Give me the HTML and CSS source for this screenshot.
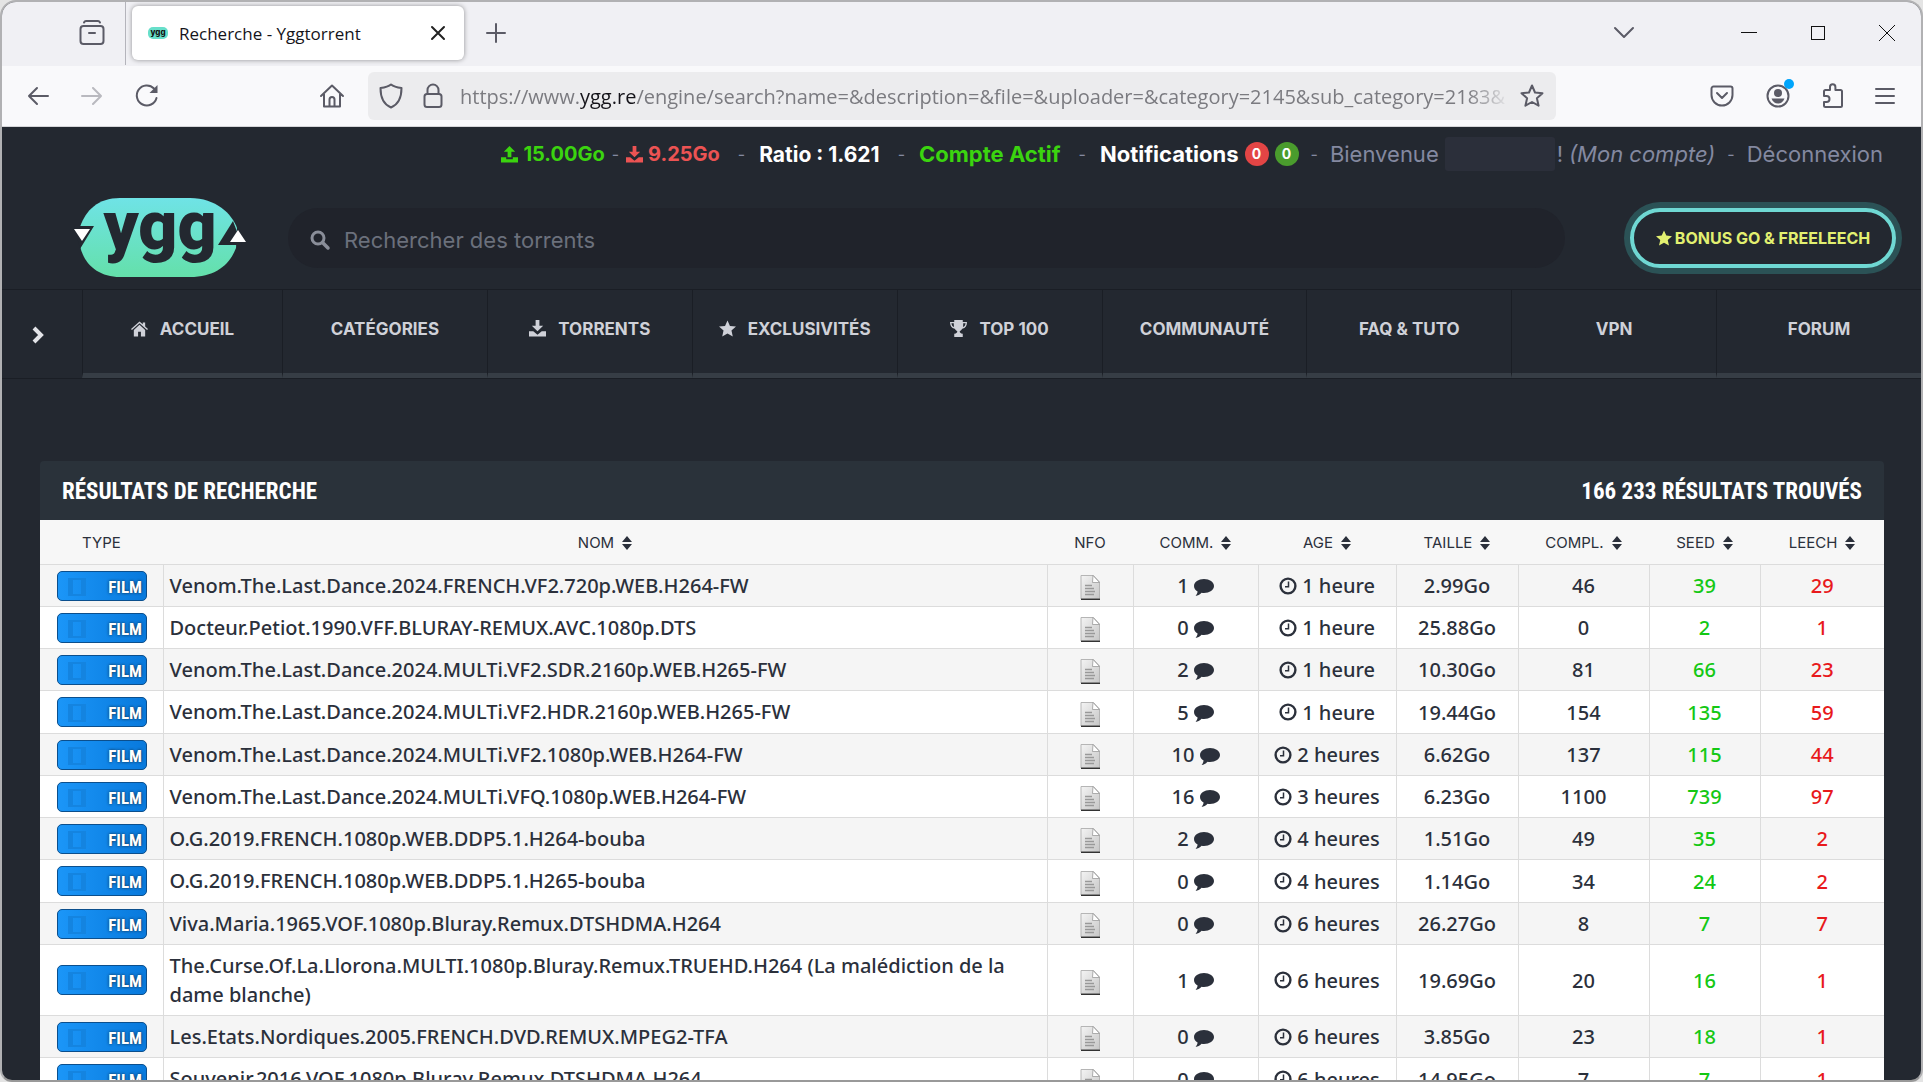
FILE: index.html
```html
<!DOCTYPE html>
<html lang="fr">
<head>
<meta charset="utf-8">
<title>Recherche - Yggtorrent</title>
<link rel="stylesheet" href="styles.css">
</head>
<body>
<svg class="sprite" aria-hidden="true">
  <defs>
    <linearGradient id="mint" x1="0" y1="0" x2="0" y2="1"><stop offset="0" stop-color="#6fe3e6"/><stop offset="1" stop-color="#64e0aa"/></linearGradient>
    <linearGradient id="paper" x1="0" y1="0" x2="1" y2="1"><stop offset="0" stop-color="#f4f4f4"/><stop offset="1" stop-color="#c6c6c6"/></linearGradient>
    <symbol id="i-sort" viewBox="0 0 10 14"><path d="M5 0 10 6H0zM5 14 0 8h10z"/></symbol>
    <symbol id="i-comment" viewBox="0 0 20 18"><path d="M10 0c5.500 0 10 3.100 10 7s-4.500 7-10 7c-.8 0-1.600-.1-2.400-.2C5.800 15.600 3.800 16.700 1.600 17c.9-1.100 1.700-2.300 2-4.400C1.400 11.300 0 9.300 0 7c0-3.900 4.500-7 10-7z"/></symbol>
    <symbol id="i-clock" viewBox="0 0 18 18"><circle cx="9" cy="9" r="7.400" fill="none" stroke="currentColor" stroke-width="2.400"/><path d="M9.500 4.500V9.800H6" fill="none" stroke="currentColor" stroke-width="1.500"/></symbol>
    <symbol id="i-nfo" viewBox="0 0 20 25"><path d="M1 .5h12.500L19.500 7v17H1z" fill="url(#paper)" stroke="#b5b5b5" stroke-width="1"/><path d="M13 .5 12.500 7.500H19.500z" fill="#fff" stroke="#9a9a9a" stroke-width=".8"/><path d="M5 10.500h7M5 13.500h9M5 16.500h10M5 19.500h9" stroke="#999" stroke-width="1.300"/><path d="M1 24.300h19" stroke="#333" stroke-width="1.400"/></symbol>
    <symbol id="i-film" viewBox="0 0 18 18"><path fill-rule="evenodd" d="M0 0h18v18H0zM5 2v14h8V2z"/></symbol>
    <symbol id="i-star" viewBox="0 0 18 17"><path d="m9 0 2.600 5.800 6.400.7-4.800 4.200L14.600 17 9 13.800 3.400 17l1.400-6.300L0 6.500l6.400-.7z"/></symbol>
    <symbol id="i-down" viewBox="0 0 18 18"><path d="M7 0h4v6h4L9 12 3 6h4zM0 12h4.500L9 15.500 13.500 12H18v5.500H0z"/></symbol>
    <symbol id="i-up" viewBox="0 0 18 18"><path d="M7 12h4V6h4L9 0 3 6h4zM0 12h5.500v2h7v-2H18v5.500H0z"/></symbol>
  </defs>
</svg>
<div class="window">
  <header class="tabstrip">
    <button class="icon-btn view-btn" aria-label="Firefox View"><svg width="26" height="26" viewBox="0 0 26 26" class="line"><path d="M5 2.500c.5-1 1-1.500 2-1.500h12c1 0 1.500.5 2 1.500"/><rect x="1.500" y="6" width="23" height="18" rx="3"/><path d="M10 13h6"/></svg></button>
    <div class="tab">
      <svg width="20" height="12" viewBox="0 0 20 12"><rect width="20" height="12" rx="5" fill="#67dfca"/><text x="10" y="8" text-anchor="middle" class="fav-text">ygg</text></svg>
      <span class="tab-title">Recherche - Yggtorrent</span>
      <button class="icon-btn" aria-label="Fermer l’onglet"><svg width="14" height="14" viewBox="0 0 14 14" class="line dark"><path d="m1 1 12 12M13 1 1 13"/></svg></button>
    </div>
    <button class="icon-btn new-tab" aria-label="Nouvel onglet"><svg width="18" height="18" viewBox="0 0 18 18" class="line"><path d="M9 0v18M0 9h18"/></svg></button>
    <div class="window-controls">
      <button class="icon-btn all-tabs" aria-label="Lister les onglets"><svg width="20" height="12" viewBox="0 0 20 12" class="line"><path d="m1 1 9 9 9-9"/></svg></button>
      <button class="icon-btn" aria-label="Réduire"><svg width="16" height="16" viewBox="0 0 16 16" class="thin"><path d="M0 7.500h16"/></svg></button>
      <button class="icon-btn" aria-label="Agrandir"><svg width="16" height="16" viewBox="0 0 16 16" class="thin"><rect x="1.500" y="1.500" width="13" height="13"/></svg></button>
      <button class="icon-btn" aria-label="Fermer"><svg width="16" height="16" viewBox="0 0 16 16" class="thin"><path d="m0 0 16 16M16 0 0 16"/></svg></button>
    </div>
  </header>
  <div class="toolbar">
    <div class="nav-buttons">
      <button class="icon-btn" aria-label="Précédent"><svg width="22" height="20" viewBox="0 0 22 20" class="line"><path d="M21 10H2M10 2l-8 8 8 8"/></svg></button>
      <button class="icon-btn faded" aria-label="Suivant"><svg width="22" height="20" viewBox="0 0 22 20" class="line"><path d="M1 10h19M12 2l8 8-8 8"/></svg></button>
      <button class="icon-btn" aria-label="Actualiser"><svg width="24" height="24" viewBox="0 0 24 24" class="line"><path d="M19 4.500A10 10 0 1 0 21.500 14"/><path d="M22.500 1v8h-8z" fill="#5b5b66" stroke="none"/></svg></button>
    </div>
    <button class="icon-btn home-btn" aria-label="Accueil"><svg width="24" height="24" viewBox="0 0 24 24" class="line"><path d="m1 12 11-10.500L23 12M4 10v12.500h16V10M9.500 22v-6.500a2.500 2.500 0 0 1 5 0V22"/></svg></button>
    <div class="urlbar">
      <svg width="24" height="26" viewBox="0 0 24 26" class="line"><path d="M12 1.500c3 2.500 6.500 3 10.500 3.500 0 9-2 16-10.500 19.500C3.500 21 1.500 14 1.500 5 5.500 4.500 9 4 12 1.500z"/></svg>
      <svg width="20" height="26" viewBox="0 0 20 26" class="line"><rect x="1.500" y="11" width="17" height="13" rx="2.500"/><path d="M4.500 11V7a5.500 5.500 0 0 1 11 0v4"/></svg>
      <div class="url">https://www.<b>ygg.re</b>/engine/search?name=&amp;description=&amp;file=&amp;uploader=&amp;category=2145&amp;sub_category=2183&amp;</div>
      <button class="icon-btn" aria-label="Marquer cette page"><svg width="24" height="24" viewBox="0 0 24 24" class="line"><path d="m12 1.500 3 7 7.500.7-5.600 5 1.700 7.500L12 18l-6.600 3.700 1.700-7.500-5.600-5L9 8.500z"/></svg></button>
    </div>
    <div class="tools">
      <button class="icon-btn" aria-label="Pocket"><svg width="24" height="22" viewBox="0 0 24 22" class="line"><path d="M3.500 1.500h17a2 2 0 0 1 2 2V10a10.500 10.500 0 0 1-21 0V3.500a2 2 0 0 1 2-2zM7 8l5 5 5-5"/></svg></button>
      <button class="icon-btn account" aria-label="Compte"><svg width="24" height="24" viewBox="0 0 24 24" class="line"><circle cx="12" cy="12" r="10.500"/><circle cx="12" cy="9" r="4" fill="#5b5b66" stroke="none"/><path d="M5.500 14.500h13c-1 3-3.500 5-6.500 5s-5.500-2-6.500-5z" fill="#5b5b66" stroke="none"/></svg><span class="dot"></span></button>
      <button class="icon-btn" aria-label="Extensions"><svg width="22" height="26" viewBox="0 0 22 26" class="line"><path d="M2 12V8.500A1.500 1.500 0 0 1 3.500 7H8V4a2.700 2.700 0 0 1 5.400 0v3h5.100A1.500 1.500 0 0 1 20 8.500v14a1.500 1.500 0 0 1-1.500 1.500h-15A1.500 1.500 0 0 1 2 22.500V19h2.500a2.700 2.700 0 0 0 0-6H2z"/></svg></button>
      <button class="icon-btn" aria-label="Menu"><svg width="18" height="16" viewBox="0 0 18 16" class="line"><path d="M0 1h18M0 8h18M0 15h18"/></svg></button>
    </div>
  </div>

  <div class="page">
    <div class="userbar">
      <span class="traffic up"><svg width="17" height="17"><use href="#i-up"/></svg>15.00Go</span>
      <span class="dash near">-</span>
      <span class="traffic down"><svg width="17" height="17"><use href="#i-down"/></svg>9.25Go</span>
      <span class="dash">-</span>
      <strong class="ratio">Ratio : 1.621</strong>
      <span class="dash">-</span>
      <strong class="active">Compte Actif</strong>
      <span class="dash">-</span>
      <strong class="notif">Notifications <span class="badge red">0</span><span class="badge green">0</span></strong>
      <span class="dash tight">-</span>
      <span class="welcome">Bienvenue <span class="masked"></span>! <a href="#"><i>(Mon compte)</i></a></span>
      <span class="dash tight">-</span>
      <a href="#">Déconnexion</a>
    </div>

    <div class="brandbar">
      <a href="#" class="logo" aria-label="ygg"><svg width="172" height="80" viewBox="0 0 172 80">
        <path d="M48 0h70c26 0 42 16 47 30l-1 20c-6 16-20 29-46 29H48C26 79 12 66 8 48V29C14 12 26 0 48 0z" fill="url(#mint)"/>
        <path d="M2 28h20L8 51zM170 47h-24l15-24z" fill="#232830"/>
        <path d="M2 31h16L10 43zM174 44h-16l8-12z" fill="#fff"/>
        <text x="88" y="51" text-anchor="middle" class="logo-text">ygg</text></svg></a>
      <label class="search"><svg width="20" height="20" viewBox="0 0 20 20"><circle cx="8" cy="8" r="6" fill="none" stroke="currentColor" stroke-width="3"/><path d="m12.500 12.500 5.500 5.500" stroke="currentColor" stroke-width="3.500" stroke-linecap="round"/></svg><input type="search" placeholder="Rechercher des torrents" aria-label="Rechercher des torrents"></label>
      <button class="bonus"><svg width="16" height="16"><use href="#i-star"/></svg>BONUS GO &amp; FREELEECH</button>
    </div>

    <nav class="menu">
      <button class="expand" aria-label="Ouvrir le menu"><svg width="12" height="18" viewBox="0 0 12 18"><path d="m2 2 7 7-7 7" fill="none" stroke="currentColor" stroke-width="4"/></svg></button>
      <a href="#"><svg width="17" height="16" viewBox="0 0 18 16"><path d="M9 0 0 8l1 1 8-7 8 7 1-1-3-2.700V1h-2.500v2.100zM9 3.500 3 9v7h4.500v-5h3v5H15V9z"/></svg>ACCUEIL</a>
      <a href="#">CATÉGORIES</a>
      <a href="#"><svg width="17" height="17"><use href="#i-down"/></svg>TORRENTS</a>
      <a href="#"><svg width="17" height="17"><use href="#i-star"/></svg>EXCLUSIVITÉS</a>
      <a href="#"><svg width="17" height="17" viewBox="0 0 18 18"><path fill-rule="evenodd" d="M4.500 0h9v2H18c0 4-1.500 6.500-5 7.200-.8 1.300-1.700 2-2.700 2.600 0 1.400.7 2.200 3.200 2.700V18h-9v-3.500c2.500-.5 3.200-1.300 3.200-2.700C6.700 11.200 5.800 10.500 5 9.200 1.500 8.500 0 6 0 2h4.500zM1.500 3.500C1.800 5.500 2.600 7 4.300 7.500 4 6.500 4 5 4 3.500zm15 0H14C14 5 14 6.500 13.700 7.500c1.700-.5 2.500-2 2.800-4z"/></svg>TOP 100</a>
      <a href="#">COMMUNAUTÉ</a>
      <a href="#">FAQ &amp; TUTO</a>
      <a href="#">VPN</a>
      <a href="#">FORUM</a>
    </nav>

    <main class="results">
      <div class="results-head"><h1>RÉSULTATS DE RECHERCHE</h1><h2>166 233 RÉSULTATS TROUVÉS</h2></div>
      <table>
        <colgroup><col class="c-type"><col><col class="c-nfo"><col class="c-comm"><col class="c-age"><col class="c-size"><col class="c-compl"><col class="c-seed"><col class="c-leech"></colgroup>
        <thead><tr>
          <th>TYPE</th>
          <th><button>NOM <svg><use href="#i-sort"/></svg></button></th>
          <th>NFO</th>
          <th><button>COMM. <svg><use href="#i-sort"/></svg></button></th>
          <th><button>AGE <svg><use href="#i-sort"/></svg></button></th>
          <th><button>TAILLE <svg><use href="#i-sort"/></svg></button></th>
          <th><button>COMPL. <svg><use href="#i-sort"/></svg></button></th>
          <th><button>SEED <svg><use href="#i-sort"/></svg></button></th>
          <th><button>LEECH <svg><use href="#i-sort"/></svg></button></th>
        </tr></thead>
        <tbody>
          <tr><td><span class="film"><svg><use href="#i-film"/></svg>FILM</span></td><td><a href="#">Venom.The.Last.Dance.2024.FRENCH.VF2.720p.WEB.H264-FW</a></td><td><svg class="nfo"><use href="#i-nfo"/></svg></td><td>1 <svg class="com"><use href="#i-comment"/></svg></td><td><svg class="clk"><use href="#i-clock"/></svg> 1 heure</td><td>2.99Go</td><td>46</td><td>39</td><td>29</td></tr>
          <tr><td><span class="film"><svg><use href="#i-film"/></svg>FILM</span></td><td><a href="#">Docteur.Petiot.1990.VFF.BLURAY-REMUX.AVC.1080p.DTS</a></td><td><svg class="nfo"><use href="#i-nfo"/></svg></td><td>0 <svg class="com"><use href="#i-comment"/></svg></td><td><svg class="clk"><use href="#i-clock"/></svg> 1 heure</td><td>25.88Go</td><td>0</td><td>2</td><td>1</td></tr>
          <tr><td><span class="film"><svg><use href="#i-film"/></svg>FILM</span></td><td><a href="#">Venom.The.Last.Dance.2024.MULTi.VF2.SDR.2160p.WEB.H265-FW</a></td><td><svg class="nfo"><use href="#i-nfo"/></svg></td><td>2 <svg class="com"><use href="#i-comment"/></svg></td><td><svg class="clk"><use href="#i-clock"/></svg> 1 heure</td><td>10.30Go</td><td>81</td><td>66</td><td>23</td></tr>
          <tr><td><span class="film"><svg><use href="#i-film"/></svg>FILM</span></td><td><a href="#">Venom.The.Last.Dance.2024.MULTi.VF2.HDR.2160p.WEB.H265-FW</a></td><td><svg class="nfo"><use href="#i-nfo"/></svg></td><td>5 <svg class="com"><use href="#i-comment"/></svg></td><td><svg class="clk"><use href="#i-clock"/></svg> 1 heure</td><td>19.44Go</td><td>154</td><td>135</td><td>59</td></tr>
          <tr><td><span class="film"><svg><use href="#i-film"/></svg>FILM</span></td><td><a href="#">Venom.The.Last.Dance.2024.MULTi.VF2.1080p.WEB.H264-FW</a></td><td><svg class="nfo"><use href="#i-nfo"/></svg></td><td>10 <svg class="com"><use href="#i-comment"/></svg></td><td><svg class="clk"><use href="#i-clock"/></svg> 2 heures</td><td>6.62Go</td><td>137</td><td>115</td><td>44</td></tr>
          <tr><td><span class="film"><svg><use href="#i-film"/></svg>FILM</span></td><td><a href="#">Venom.The.Last.Dance.2024.MULTi.VFQ.1080p.WEB.H264-FW</a></td><td><svg class="nfo"><use href="#i-nfo"/></svg></td><td>16 <svg class="com"><use href="#i-comment"/></svg></td><td><svg class="clk"><use href="#i-clock"/></svg> 3 heures</td><td>6.23Go</td><td>1100</td><td>739</td><td>97</td></tr>
          <tr><td><span class="film"><svg><use href="#i-film"/></svg>FILM</span></td><td><a href="#">O.G.2019.FRENCH.1080p.WEB.DDP5.1.H264-bouba</a></td><td><svg class="nfo"><use href="#i-nfo"/></svg></td><td>2 <svg class="com"><use href="#i-comment"/></svg></td><td><svg class="clk"><use href="#i-clock"/></svg> 4 heures</td><td>1.51Go</td><td>49</td><td>35</td><td>2</td></tr>
          <tr><td><span class="film"><svg><use href="#i-film"/></svg>FILM</span></td><td><a href="#">O.G.2019.FRENCH.1080p.WEB.DDP5.1.H265-bouba</a></td><td><svg class="nfo"><use href="#i-nfo"/></svg></td><td>0 <svg class="com"><use href="#i-comment"/></svg></td><td><svg class="clk"><use href="#i-clock"/></svg> 4 heures</td><td>1.14Go</td><td>34</td><td>24</td><td>2</td></tr>
          <tr><td><span class="film"><svg><use href="#i-film"/></svg>FILM</span></td><td><a href="#">Viva.Maria.1965.VOF.1080p.Bluray.Remux.DTSHDMA.H264</a></td><td><svg class="nfo"><use href="#i-nfo"/></svg></td><td>0 <svg class="com"><use href="#i-comment"/></svg></td><td><svg class="clk"><use href="#i-clock"/></svg> 6 heures</td><td>26.27Go</td><td>8</td><td>7</td><td>7</td></tr>
          <tr><td><span class="film"><svg><use href="#i-film"/></svg>FILM</span></td><td><a href="#">The.Curse.Of.La.Llorona.MULTI.1080p.Bluray.Remux.TRUEHD.H264 (La malédiction de la dame blanche)</a></td><td><svg class="nfo"><use href="#i-nfo"/></svg></td><td>1 <svg class="com"><use href="#i-comment"/></svg></td><td><svg class="clk"><use href="#i-clock"/></svg> 6 heures</td><td>19.69Go</td><td>20</td><td>16</td><td>1</td></tr>
          <tr><td><span class="film"><svg><use href="#i-film"/></svg>FILM</span></td><td><a href="#">Les.Etats.Nordiques.2005.FRENCH.DVD.REMUX.MPEG2-TFA</a></td><td><svg class="nfo"><use href="#i-nfo"/></svg></td><td>0 <svg class="com"><use href="#i-comment"/></svg></td><td><svg class="clk"><use href="#i-clock"/></svg> 6 heures</td><td>3.85Go</td><td>23</td><td>18</td><td>1</td></tr>
          <tr><td><span class="film"><svg><use href="#i-film"/></svg>FILM</span></td><td><a href="#">Souvenir.2016.VOF.1080p.Bluray.Remux.DTSHDMA.H264</a></td><td><svg class="nfo"><use href="#i-nfo"/></svg></td><td>0 <svg class="com"><use href="#i-comment"/></svg></td><td><svg class="clk"><use href="#i-clock"/></svg> 6 heures</td><td>14.95Go</td><td>7</td><td>7</td><td>1</td></tr>
        </tbody>
      </table>
    </main>
  </div>
</div>
</body>
</html>
```
FILE: styles.css
```css
* { box-sizing: border-box; }
body { margin: 0; background: #e4e4e4; font-family: Inter, "Liberation Sans", sans-serif; }
a { color: inherit; text-decoration: none; }
button { font: inherit; color: inherit; background: none; border: 0; padding: 0; cursor: pointer; }
svg { display: block; fill: currentColor; flex: none; overflow: visible; }
.sprite { position: absolute; width: 0; height: 0; }

.window { height: 100vh; display: flex; flex-direction: column; overflow: hidden; border: 2px solid #b1b1b3; border-bottom-color: #999; border-radius: 16px 16px 12px 12px; background: #232830; }

/* Browser chrome */
.line { fill: none; stroke: #5b5b66; stroke-width: 2; stroke-linecap: round; stroke-linejoin: round; }
.line.dark { stroke: #222; stroke-width: 2; }
.thin { fill: none; stroke: #111; stroke-width: 1; }
.icon-btn { display: flex; align-items: center; justify-content: center; }
.faded { opacity: .4; }
.tabstrip { flex: none; height: 64px; display: flex; align-items: center; padding-bottom: 2px; background: #f0f0f4; }
.view-btn { width: 124px; height: 64px; padding-left: 56px; border-right: 1px solid #b4b4bb; }
.tab { display: flex; align-items: center; gap: 11px; width: 332px; height: 54px; margin: 0 23px 0 6px; padding: 0 19px 0 16px; background: #fff; border-radius: 6px; box-shadow: 0 0 5px rgba(0, 0, 0, .4); }
.tab-title { flex: 1; font: 17px "Open Sans", sans-serif; color: #15141a; }
.fav-text { font: 800 8px Inter, sans-serif; fill: #111; }
.window-controls { margin-left: auto; display: flex; gap: 53px; padding-right: 26px; }
.all-tabs { margin-right: 54px; }

.toolbar { flex: none; height: 61px; display: flex; align-items: center; background: #f9f9fb; border-bottom: 1px solid #d5d5d8; padding: 0 27px 0 25px; }
.nav-buttons { display: flex; gap: 32px; }
.home-btn { margin: 0 24px 0 161px; }
.urlbar { flex: 1; min-width: 0; height: 48px; display: flex; align-items: center; padding: 0 12px 0 11px; background: #ececee; border-radius: 6px; }
.urlbar svg + svg { margin: 0 17px 0 20px; }
.url { flex: 1; min-width: 0; overflow: hidden; white-space: nowrap; font: 20px "Open Sans", sans-serif; color: #7b7b80; -webkit-mask-image: linear-gradient(90deg, #000 96%, transparent); mask-image: linear-gradient(90deg, #000 96%, transparent); }
.url b { font-weight: 400; color: #15141a; }
.urlbar .icon-btn { margin-left: 10px; }
.tools { display: flex; align-items: center; gap: 32px; margin-left: 154px; }
.account { position: relative; }
.dot { position: absolute; top: -5px; right: -4px; width: 10px; height: 10px; border-radius: 50%; background: #00a5fb; }

/* Site header */
.page { flex: 1; min-height: 0; overflow: hidden; color: #fff; }
.userbar { display: flex; align-items: center; justify-content: flex-end; height: 54px; padding-right: 38px; font-size: 22px; color: #8489a0; white-space: nowrap; }
.userbar strong { font-weight: 700; color: #fff; }
.userbar strong.active, .up { color: #3bd40f; }
.down { color: #ec5353; }
.traffic { display: flex; align-items: center; gap: 5px; font-size: 20px; font-weight: 700; }
.userbar .ratio { font-size: 21px; }
.dash { margin: 0 14px 0 18px; font-size: 16px; }
.dash.near { margin: 0 7px; }
.dash.tight { margin: 0 12px; }
.notif, .welcome { display: flex; align-items: center; gap: 6px; }
.badge { width: 24px; height: 24px; border-radius: 50%; font-size: 14px; line-height: 24px; text-align: center; }
.red { background: #e34545; }
.green { background: #4a9c2d; }
.masked { width: 110px; height: 34px; margin-right: -4px; background: #2b2f3a; border-radius: 3px; }

.brandbar { display: flex; align-items: center; height: 108px; padding: 6px 25px 0 70px; }
.logo-text { font: 900 68px Roboto, sans-serif; fill: #232830; }
.search { flex: 1; display: flex; align-items: center; gap: 12px; height: 60px; margin: 0 65px 0 44px; padding: 4px 22px 0; border-radius: 30px; background: #20232b; color: #8a8e99; }
.search input { flex: 1; border: 0; outline: 0; background: none; font: 22px Inter, sans-serif; color: #fff; }
.search input::placeholder { color: #6b707c; opacity: 1; }
.bonus { display: flex; align-items: center; justify-content: center; gap: 3px; width: 266px; height: 60px; border: 4px solid #6fd8d3; border-radius: 30px; box-shadow: 0 0 0 6px #2b5256; color: #e2f070; font-size: 16px; font-weight: 700; white-space: nowrap; }

.menu { display: grid; grid-template-columns: 80px 200px repeat(8, 1fr); height: 90px; border-top: 1px solid #1a1e25; border-bottom: 1px solid #1a1e25; color: #cfd1d8; }
.menu a { display: flex; align-items: center; justify-content: center; gap: 12px; padding-bottom: 6px; border-left: 1px solid #1a1e25; border-bottom: 5px solid #363d45; font-size: 17px; font-weight: 700; }
.expand { display: flex; align-items: center; padding: 2px 0 0 30px; color: #e3e4e8; }

/* Results */
.results { margin: 82px 37px 0 38px; }
.results-head { display: flex; align-items: center; justify-content: space-between; height: 59px; padding: 2px 22px 0; background: #2a323a; border-radius: 4px 4px 0 0; }
.results-head h1, .results-head h2 { margin: 0; font: 700 23px "Roboto Condensed", "Liberation Sans Narrow", Roboto, sans-serif; }
table { width: 100%; table-layout: fixed; border-collapse: collapse; background: #fff; color: #2b303b; }
.c-type { width: 123px; }
.c-nfo { width: 86px; }
.c-comm { width: 125px; }
.c-age { width: 138px; }
.c-size { width: 122px; }
.c-compl { width: 131px; }
.c-seed { width: 111px; }
.c-leech { width: 124px; }
th { height: 44px; padding: 2px 0 0; background: #f7f7f7; font-size: 15px; font-weight: 400; }
th button { display: inline-flex; align-items: center; gap: 8px; }
th svg { width: 10px; height: 14px; }
td { height: 42px; padding: 1px 6px 0; border: 1px solid #dcdcdc; border-width: 1px 0 0 1px; text-align: center; font: 500 20px/29px "Noto Sans", "Open Sans", sans-serif; }
td:first-child { border-left: 0; }
td:nth-child(2) { padding: 6px 40px 6px 6px; text-align: left; }
tbody tr:nth-child(odd) { background: #f5f5f5; }
tbody tr:nth-child(4n) td { height: 43px; }
td svg { display: inline-block; vertical-align: middle; }
.nfo { width: 20px; height: 25px; }
.com { width: 20px; height: 18px; }
.clk { width: 18px; height: 18px; margin-top: -4px; }
td:nth-child(8) { color: #14c814; }
td:nth-child(9) { color: #e8191c; }
.film { display: flex; align-items: center; justify-content: space-between; width: 90px; height: 30px; margin-left: 11px; padding: 2px 4px 0 10px; border: 1px solid #0b4f8d; border-radius: 5px; background: linear-gradient(90deg, #1b96f8, #0879dc); color: #fff; font: 700 17px "Roboto Condensed", "Liberation Sans Narrow", sans-serif; text-shadow: 0 0 3px #123; }
.film svg { width: 18px; height: 18px; color: #1484e0; }
```
